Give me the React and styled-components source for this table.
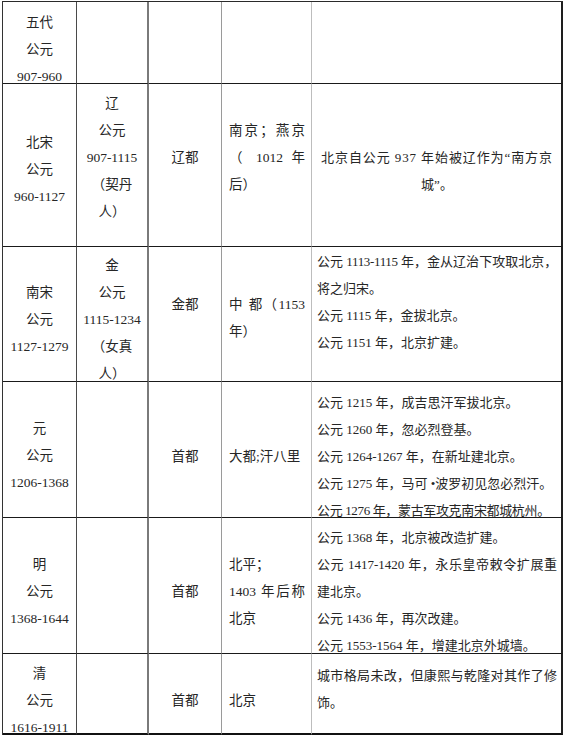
import React from 'react';
import styled, { createGlobalStyle, css } from 'styled-components';

const GlobalStyle = createGlobalStyle`
  html, body {
    margin: 0;
    padding: 0;
    background: #ffffff;
  }
  body {
    font-family: "Liberation Serif", "Noto Sans CJK SC", serif;
    color: #262626;
  }
`;

// rule on the right edge of each column, left to right
const rules = {
  dark: '1px solid #4a4a4a',
  thick: '2px solid #7a7a7a',
  mid: '1px solid #9a9a9a',
  light: '1px solid #bdbdbd',
  outer: '2px solid #1e1e1e',
};

const Table = styled.div`
  margin: 1px 0 0 2px;
  width: 561px;
  display: grid;
  grid-template-columns: 74px 72px 73px 90px 251px;
  grid-template-rows: 82px 163px 135px 136px 136px 81px;
  border-top: 1px solid #2a2a2a;
  border-left: 1px solid #333;
  box-sizing: border-box;
`;

const Cell = styled.div`
  box-sizing: border-box;
  border-right: ${(p) => rules[p.$rule]};
  border-bottom: ${(p) => (p.$last ? '2px solid #111' : '1px solid #1a1a1a')};
  padding: ${(p) => p.$top}px ${(p) => Math.max(p.$inset - 1, 0)}px 0 ${(p) => p.$inset}px;
  text-align: ${(p) => (p.$align === 'left' ? 'left' : 'center')};
  font-size: ${(p) => (p.$note ? 13 : 13.5)}px;
  overflow: visible;
`;

const Line = styled.div`
  line-height: 27px;
  white-space: nowrap;
  ${(p) =>
    p.$spread &&
    css`
      text-align: justify;
      text-align-last: justify;
    `}
  ${(p) => p.$tight && css`letter-spacing: -0.35px;`}
  ${(p) => p.$loose && css`letter-spacing: 0.9px;`}
`;

const L = (t, opts = {}) => ({ t, ...opts });

const rows = [
  [
    { lines: ['五代', '公元', '907-960'], top: 6.5 },
    {}, {}, {}, {},
  ],
  [
    { lines: ['北宋', '公元', '960-1127'], top: 44.5 },
    { lines: ['辽', '公元', '907-1115', '（契丹', '人）'], top: 5.5 },
    { lines: ['辽都'], top: 59.5 },
    { lines: [L('南京；燕京', { spread: true }), L('（ 1012 年', { spread: true }), '后）'], top: 32.5, align: 'left' },
    { lines: [L('北京自公元 937 年始被辽作为“南方京', { loose: true }), '城”。'], top: 59.5 },
  ],
  [
    { lines: ['南宋', '公元', '1127-1279'], top: 31.5 },
    { lines: ['金', '公元', '1115-1234', '（女真', '人）'], top: 4.5 },
    { lines: ['金都'], top: 44 },
    { lines: [L('中 都（1153', { spread: true }), '年）'], top: 44, align: 'left' },
    {
      lines: [
        L('公元 1113-1115 年，金从辽治下攻取北京，', { spread: true, tight: true }),
        '将之归宋。',
        '公元 1115 年，金拔北京。',
        '公元 1151 年，北京扩建。',
      ],
      top: 0.5,
      align: 'left',
    },
  ],
  [
    { lines: ['元', '公元', '1206-1368'], top: 32.5 },
    {},
    { lines: ['首都'], top: 60.5 },
    { lines: ['大都;汗八里'], top: 60.5, align: 'left' },
    {
      lines: [
        '公元 1215 年，成吉思汗军拔北京。',
        '公元 1260 年，忽必烈登基。',
        '公元 1264-1267 年，在新址建北京。',
        '公元 1275 年，马可 •波罗初见忽必烈汗。',
        L('公元 1276 年，蒙古军攻克南宋都城杭州。', { tight: true }),
      ],
      top: 6.5,
      align: 'left',
    },
  ],
  [
    { lines: ['明', '公元', '1368-1644'], top: 32.5 },
    {},
    { lines: ['首都'], top: 59.5 },
    { lines: ['北平；', L('1403 年后称', { spread: true }), '北京'], top: 32.5, align: 'left' },
    {
      lines: [
        '公元 1368 年，北京被改造扩建。',
        L('公元 1417-1420 年，永乐皇帝敕令扩展重', { spread: true }),
        '建北京。',
        '公元 1436 年，再次改建。',
        '公元 1553-1564 年，增建北京外城墙。',
      ],
      top: 5.5,
      align: 'left',
    },
  ],
  [
    { lines: ['清', '公元', '1616-1911'], top: 5.5 },
    {},
    { lines: ['首都'], top: 32.5 },
    { lines: ['北京'], top: 32.5, align: 'left' },
    { lines: [L('城市格局未改，但康熙与乾隆对其作了修', { spread: true }), '饰。'], top: 7.5, align: 'left' },
  ],
];

const columnRules = ['dark', 'thick', 'mid', 'light', 'outer'];
const insets = [0, 0, 0, 7, 5];

export default function App() {
  return (
    <>
      <GlobalStyle />
      <Table>
        {rows.map((row, r) =>
          row.map((cell, c) => (
            <Cell
              key={`${r}-${c}`}
              $rule={columnRules[c]}
              $last={r === rows.length - 1}
              $top={cell.top || 0}
              $align={cell.align || 'center'}
              $inset={insets[c]}
              $note={c === 4}
            >
              {(cell.lines || []).map((line, i) => {
                const item = typeof line === 'string' ? { t: line } : line;
                return (
                  <Line key={i} $spread={item.spread} $tight={item.tight} $loose={item.loose}>
                    {item.t}
                  </Line>
                );
              })}
            </Cell>
          ))
        )}
      </Table>
    </>
  );
}
